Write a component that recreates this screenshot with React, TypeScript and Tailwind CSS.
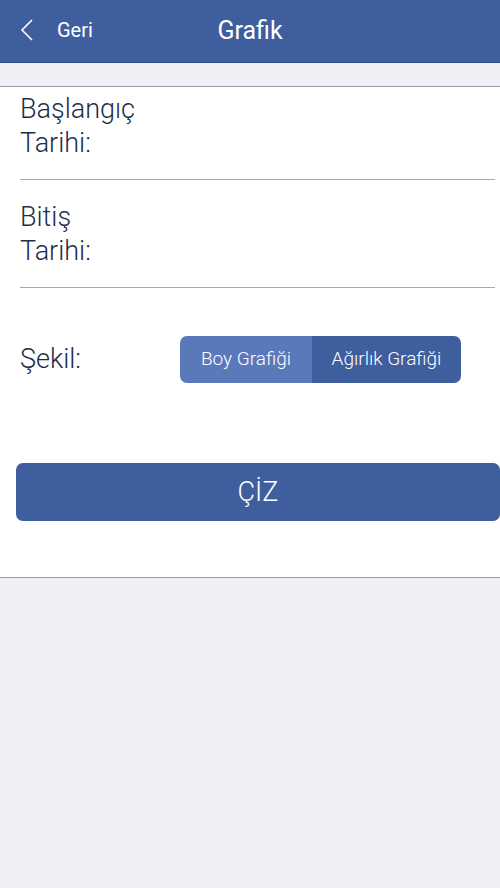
export default function App() {
  return (
    <div className="flex h-[888px] w-[500px] flex-col bg-[#efeff5] font-['Roboto',sans-serif]">
      <header className="relative flex h-[63px] shrink-0 items-center justify-center border-b border-[#2f4c86] bg-[#3f5e9e] text-white">
        <div className="absolute left-[20px] top-0 flex h-full items-center gap-[23px] pb-[2px]">
          <svg width="14" height="22" viewBox="0 0 14 22" fill="none" stroke="currentColor" strokeWidth="1.6">
            <polyline points="12,1 2,11 12,21" />
          </svg>
          <span className="text-[20px]">Geri</span>
        </div>
        <h1 className="text-[25px] font-normal">Grafik</h1>
      </header>

      <div className="h-[23px] shrink-0" />

      <main className="flex flex-col border-y border-[#9a9a9a] bg-white font-light text-[#1d2f48]">
        <div className="ml-5 mr-[5px] border-b border-[#a8a8a8] pb-[19px] pt-[5px] text-[27px] leading-[34px]">
          <div>Başlangıç</div>
          <div>Tarihi:</div>
        </div>
        <div className="ml-5 mr-[5px] border-b border-[#a8a8a8] pb-[19px] pt-[20px] text-[27px] leading-[34px]">
          <div>Bitiş</div>
          <div>Tarihi:</div>
        </div>

        <div className="ml-5 mt-[48px] flex items-center">
          <span className="w-[160px] text-[27px]">Şekil:</span>
          <div className="flex h-[47px] w-[281px] overflow-hidden rounded-[7px] text-[19px] font-light text-white">
            <button type="button" className="w-[132px] bg-[#5a79ba]">Boy Grafiği</button>
            <button type="button" className="flex-1 bg-[#3f5e9e]">Ağırlık Grafiği</button>
          </div>
        </div>

        <div className="ml-4 mt-[80px] mb-[56px]">
          <button
            type="button"
            className="flex h-[58px] w-[484px] items-center justify-center rounded-[7px] bg-[#3f5e9e] text-[27px] font-light text-white"
          >
            ÇİZ
          </button>
        </div>
      </main>
    </div>
  );
}
